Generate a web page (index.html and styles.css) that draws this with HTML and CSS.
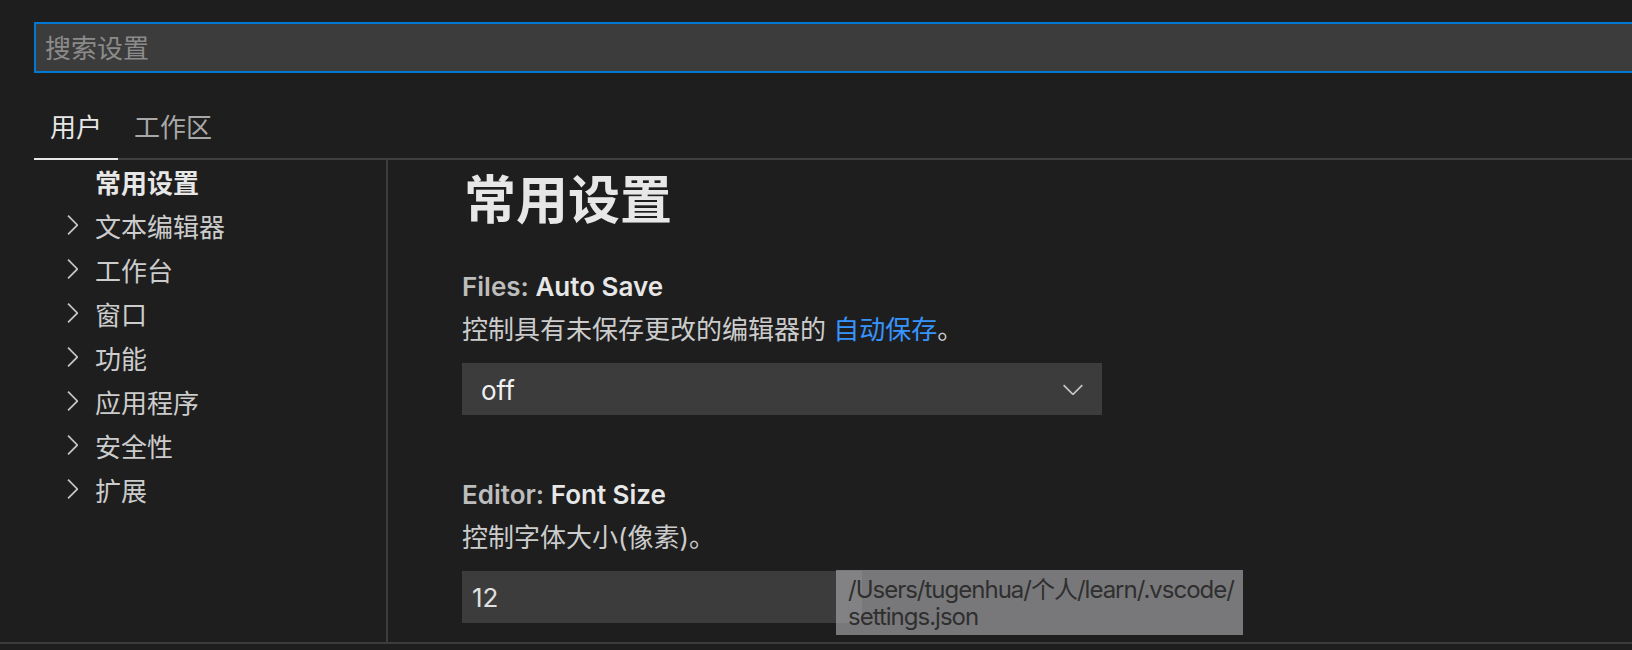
FILE: index.html
```html
<!DOCTYPE html>
<html lang="zh-CN">
<head>
<meta charset="utf-8">
<title>设置</title>
<link rel="stylesheet" href="styles.css">
</head>
<body>
<div class="settings">
  <header class="header">
    <div class="search"><span class="placeholder">搜索设置</span></div>
    <div class="tabs">
      <div class="tab active">用户</div>
      <div class="tab">工作区</div>
    </div>
  </header>
  <div class="body">
    <nav class="toc">
      <div class="toc-row current"><span class="label">常用设置</span></div>
      <div class="toc-row"><svg class="chev" viewBox="0 0 16 16"><path d="M10.072 8.024L5.715 3.667l.618-.62L11 7.716v.618L6.333 13l-.618-.619 4.357-4.357z"/></svg><span class="label">文本编辑器</span></div>
      <div class="toc-row"><svg class="chev" viewBox="0 0 16 16"><path d="M10.072 8.024L5.715 3.667l.618-.62L11 7.716v.618L6.333 13l-.618-.619 4.357-4.357z"/></svg><span class="label">工作台</span></div>
      <div class="toc-row"><svg class="chev" viewBox="0 0 16 16"><path d="M10.072 8.024L5.715 3.667l.618-.62L11 7.716v.618L6.333 13l-.618-.619 4.357-4.357z"/></svg><span class="label">窗口</span></div>
      <div class="toc-row"><svg class="chev" viewBox="0 0 16 16"><path d="M10.072 8.024L5.715 3.667l.618-.62L11 7.716v.618L6.333 13l-.618-.619 4.357-4.357z"/></svg><span class="label">功能</span></div>
      <div class="toc-row"><svg class="chev" viewBox="0 0 16 16"><path d="M10.072 8.024L5.715 3.667l.618-.62L11 7.716v.618L6.333 13l-.618-.619 4.357-4.357z"/></svg><span class="label">应用程序</span></div>
      <div class="toc-row"><svg class="chev" viewBox="0 0 16 16"><path d="M10.072 8.024L5.715 3.667l.618-.62L11 7.716v.618L6.333 13l-.618-.619 4.357-4.357z"/></svg><span class="label">安全性</span></div>
      <div class="toc-row"><svg class="chev" viewBox="0 0 16 16"><path d="M10.072 8.024L5.715 3.667l.618-.62L11 7.716v.618L6.333 13l-.618-.619 4.357-4.357z"/></svg><span class="label">扩展</span></div>
    </nav>
    <main class="content">
      <h1 class="group-title">常用设置</h1>
      <section class="setting">
        <div class="setting-title"><span class="category">Files: </span><span class="name">Auto Save</span></div>
        <div class="setting-desc">控制具有未保存更改的编辑器的 <a class="link">自动保存</a>。</div>
        <div class="select">
          <span class="select-value">off</span>
          <svg class="select-chev" viewBox="0 0 16 16"><path d="M7.976 10.072l4.357-4.357.62.618L8.284 11h-.618L3 6.333l.619-.618 4.357 4.357z"/></svg>
        </div>
      </section>
      <section class="setting second">
        <div class="setting-title"><span class="category">Editor: </span><span class="name">Font Size</span></div>
        <div class="setting-desc">控制字体大小(像素)。</div>
        <div class="input">12</div>
      </section>
    </main>
  </div>
  <div class="panel-border"></div>
  <div class="tooltip">/Users/tugenhua/个人/learn/.vscode/<br>settings.json</div>
</div>
</body>
</html>
```

FILE: styles.css
```css
html, body {
  margin: 0;
  padding: 0;
  width: 1632px;
  height: 650px;
  overflow: hidden;
  background: #1e1e1e;
}

.settings {
  position: relative;
  width: 1632px;
  height: 650px;
  overflow: hidden;
  font-family: Inter, "Noto Sans CJK SC", sans-serif;
  color: #cccccc;
}

.header {
  padding: 22px 0 0 34px;
}

.search {
  box-sizing: border-box;
  height: 51px;
  margin-right: -40px;
  border: 2px solid #0078d4;
  background: #3c3c3c;
  display: flex;
  align-items: center;
  padding-left: 9px;
}

.placeholder {
  font-size: 26px;
  line-height: 36px;
  color: #8b8b8b;
  position: relative;
  top: 1px;
}

.tabs {
  display: flex;
  padding-top: 37px;
  border-bottom: 2px solid #404040;
}

.tab {
  font-size: 26px;
  line-height: 36px;
  padding: 0 16px 12px 16px;
  color: #a8a8a8;
}

.tab.active {
  color: #e7e7e7;
  border-bottom: 2px solid #e7e7e7;
  margin-bottom: -2px;
  padding-bottom: 12px;
}

.body {
  display: flex;
  margin-left: 34px;
  height: 482px;
}

.toc {
  box-sizing: border-box;
  width: 354px;
  border-right: 2px solid #3c3c3c;
  padding-top: 0;
}

.toc-row {
  box-sizing: border-box;
  display: flex;
  align-items: center;
  height: 44px;
  padding-left: 22px;
  padding-bottom: 2px;
  font-size: 26px;
  color: #cccccc;
}

.toc-row.current {
  padding-left: 61px;
  font-weight: 700;
  color: #e7e7e7;
}

.chev {
  width: 32px;
  height: 32px;
  margin-right: 7px;
  fill: #c5c5c5;
  flex: none;
}

.content {
  flex: 1;
  padding-left: 74px;
}

.group-title {
  margin: 9px 0 36px 0;
  font-size: 52px;
  line-height: 64px;
  font-weight: 700;
  color: #e7e7e7;
  position: relative;
  left: 2px;
}

.setting-title {
  font-size: 26px;
  line-height: 36px;
  font-weight: 600;
}

.category {
  color: #bdbdbd;
}

.name {
  color: #e7e7e7;
}

.setting-desc {
  margin-top: 7px;
  font-size: 26px;
  line-height: 36px;
  color: #cccccc;
}

.link {
  color: #3794ff;
}

.select {
  box-sizing: border-box;
  margin-top: 15px;
  width: 640px;
  height: 52px;
  background: #3c3c3c;
  display: flex;
  align-items: center;
  justify-content: space-between;
  padding: 0 13px 0 19px;
}

.select-value {
  font-size: 26px;
  color: #f0f0f0;
  position: relative;
  top: 1px;
}

.select-chev {
  width: 32px;
  height: 32px;
  fill: #c5c5c5;
}

.setting.second {
  margin-top: 62px;
}

.input {
  box-sizing: border-box;
  margin-top: 15px;
  width: 400px;
  height: 52px;
  background: #3c3c3c;
  display: flex;
  align-items: center;
  padding-left: 10px;
  font-size: 26px;
  color: #e0e0e0;
}

.panel-border {
  height: 2px;
  background: #3c3c3c;
}

.tooltip {
  position: absolute;
  left: 836px;
  top: 570px;
  box-sizing: border-box;
  width: 407px;
  height: 65px;
  padding: 6px 0 0 12px;
  background: rgba(166, 165, 168, 0.67);
  color: #2f2f2f;
  font-size: 24px;
  line-height: 27px;
  letter-spacing: -1px;
  white-space: nowrap;
}
```
